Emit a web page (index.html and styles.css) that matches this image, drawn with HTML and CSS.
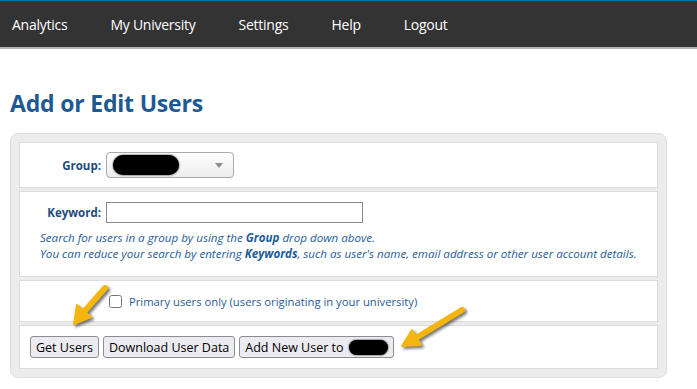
FILE: index.html
```html
<!DOCTYPE html>
<html lang="en">
<head>
    <meta charset="UTF-8">
    <meta name="viewport" content="width=device-width, initial-scale=1.0">
    <title>Add or Edit Users</title>
    <link rel="stylesheet" href="styles.css">
</head>
<body>
    <!-- Top navigation -->
    <nav class="topbar">
        <a href="#" class="navLink">Analytics</a>
        <a href="#" class="navLink">My University</a>
        <a href="#" class="navLink">Settings</a>
        <a href="#" class="navLink">Help</a>
        <a href="#" class="navLink">Logout</a>
    </nav>

    <div class="content">
        <h1 class="pageTitle">Add or Edit Users</h1>

        <div class="panel">
            <!-- Group select -->
            <div class="row groupRow">
                <label class="fieldLabel" for="groupSelect">Group:</label>
                <div class="fakeSelect" id="groupSelect">
                    <span class="redacted"></span>
                    <span class="selectArrow"></span>
                </div>
            </div>

            <!-- Keyword search -->
            <div class="row keywordRow">
                <div class="fieldLine">
                    <label class="fieldLabel" for="keywordField">Keyword:</label>
                    <input type="text" id="keywordField" class="keywordField">
                </div>
                <p class="helpText">
                    Search for users in a group by using the <b>Group</b> drop down above.<br>
                    You can reduce your search by entering <b>Keywords</b>, such as user's name, email address or other user account details.
                </p>
            </div>

            <!-- Primary users checkbox -->
            <div class="row checkRow">
                <input type="checkbox" id="primaryOnly" class="primaryCheck">
                <label for="primaryOnly" class="checkLabel">Primary users only (users originating in your university)</label>
            </div>

            <!-- Actions -->
            <div class="row buttonRow">
                <button class="actionButton">Get Users</button>
                <button class="actionButton">Download User Data</button>
                <button class="actionButton">Add New User to <span class="redacted small"></span></button>
            </div>
        </div>
    </div>

    <!-- Highlight arrows drawn over the form -->
    <svg class="arrows" width="697" height="389" viewBox="0 0 697 389">
        <g class="arrow">
            <path d="M105 288 L83 313" />
            <polygon points="74,324 77,305 91,317" />
        </g>
        <g class="arrow">
            <path d="M462 310 L416 338" />
            <polygon points="402,346 412,330 421,345" />
        </g>
    </svg>
</body>
</html>
```

FILE: styles.css
```css
/* page basics */
body {
    margin: 0;
    font-family: "Open Sans", "Noto Sans", sans-serif;
    background-color: #ffffff;
    position: relative;
}

/* dark navigation bar */
.topbar {
    display: flex;
    align-items: center;
    height: 46px;
    padding-left: 12px;
    background-color: #333333;
    border-top: 1px solid #0f6ea3;
    border-bottom: 2px solid #b4b4b4;
    gap: 43px;
}

.navLink {
    color: #ffffff;
    text-decoration: none;
    font-size: 14px;
    letter-spacing: -0.25px;
}

.content {
    padding: 0 10px;
}

.pageTitle {
    margin: 40px 0 16px 0;
    font-size: 23px;
    font-weight: bold;
    letter-spacing: -0.2px;
    color: #1d5a93;
    line-height: 28px;
}

/* grey rounded box around the form rows */
.panel {
    width: 639px;
    padding: 8px 8px 8px 8px;
    background-color: #ececec;
    border: 1px solid #dedede;
    border-radius: 8px;
    display: flex;
    flex-direction: column;
    gap: 3px;
}

.row {
    background-color: #ffffff;
    border: 1px solid #dcdcdc;
}

.groupRow {
    height: 44px;
    display: flex;
    align-items: center;
}

.fieldLabel {
    width: 81px;
    text-align: right;
    font-size: 11.5px;
    font-weight: bold;
    color: #1e4c7c;
    margin-right: 5px;
}

.fakeSelect {
    position: relative;
    width: 126px;
    height: 24px;
    border: 1px solid #a9a9a9;
    border-radius: 4px;
    background: linear-gradient(#ffffff, #ececec);
}

.redacted {
    position: absolute;
    left: 6px;
    top: 2px;
    width: 66px;
    height: 20px;
    border-radius: 10px;
    background-color: #000000;
    box-shadow: 0 0 2px #000000;
}

.redacted.small {
    position: static;
    display: inline-block;
    width: 39px;
    height: 15px;
    vertical-align: -3px;
    margin-left: 2px;
}

.selectArrow {
    position: absolute;
    right: 10px;
    top: 10px;
    border-left: 4px solid transparent;
    border-right: 4px solid transparent;
    border-top: 5px solid #8e8e8e;
}

.keywordRow {
    height: 84px;
}

.fieldLine {
    display: flex;
    align-items: center;
    margin-top: 10px;
}

.keywordField {
    width: 253px;
    height: 17px;
    margin: 0;
    border: 1px solid #8a8a8a;
    padding: 1px;
}

.helpText {
    margin: 7px 0 0 20px;
    font-size: 11.6px;
    font-style: italic;
    line-height: 16px;
    color: #1f5c99;
}

.checkRow {
    height: 40px;
    display: flex;
    align-items: center;
}

.primaryCheck {
    width: 13px;
    height: 13px;
    margin: 0 7px 0 89px;
}

.checkLabel {
    font-size: 11.25px;
    color: #1f5c99;
}

.buttonRow {
    height: 42px;
    display: flex;
    align-items: center;
    padding-left: 10px;
    gap: 4px;
}

.actionButton {
    height: 22px;
    padding: 0 5px;
    font-family: "Open Sans", "Noto Sans", sans-serif;
    font-size: 12.5px;
    color: #000000;
    background-color: #ecebf1;
    border: 1px solid #8d8d8d;
    border-radius: 3px;
}

/* overlay arrows */
.arrows {
    position: absolute;
    left: 0;
    top: 0;
    pointer-events: none;
}

.arrow {
    filter: drop-shadow(2px 2px 1.5px rgba(0, 0, 0, 0.55));
}

.arrow path {
    stroke: #f5b50f;
    stroke-width: 6;
    stroke-linecap: round;
    fill: none;
}

.arrow polygon {
    fill: #f5b50f;
    stroke: #f5b50f;
    stroke-width: 2;
    stroke-linejoin: round;
}
```
